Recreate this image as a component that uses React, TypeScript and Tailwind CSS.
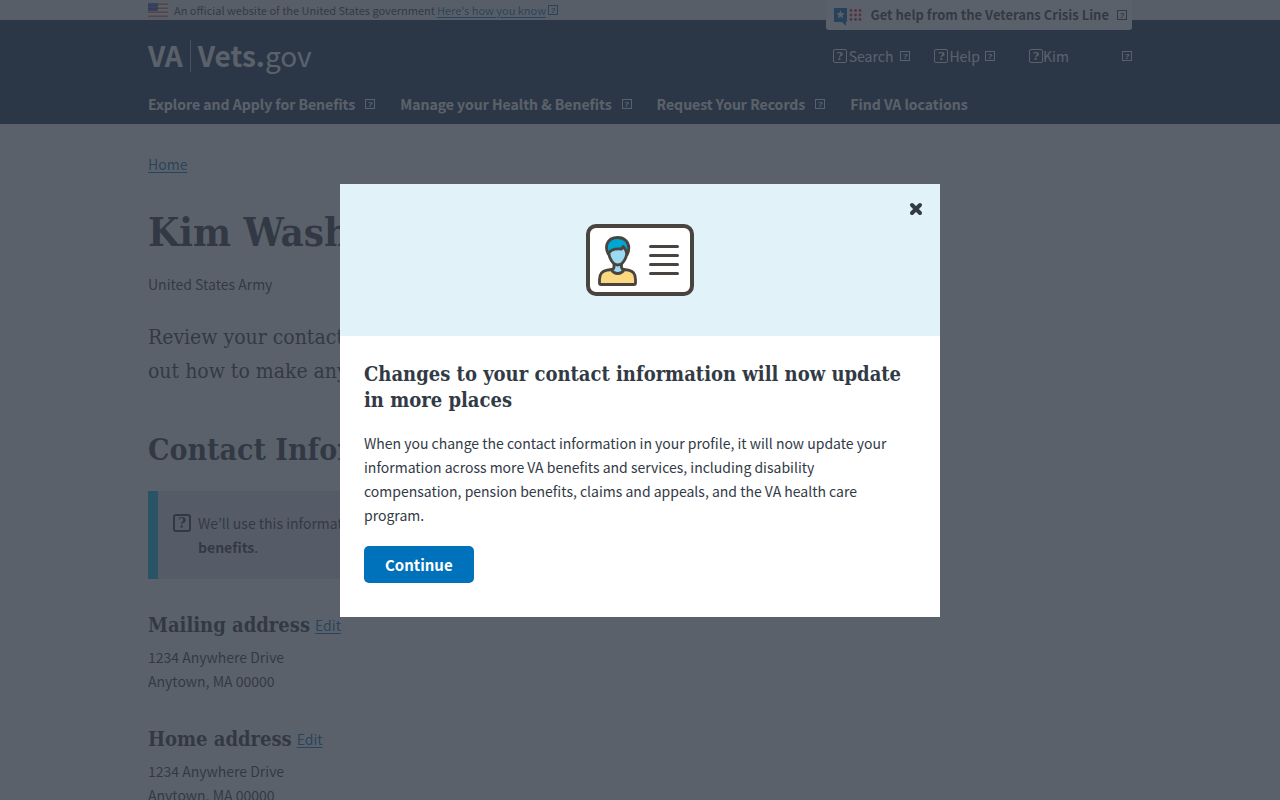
import React from "react";

const sans = "font-['Noto_Sans_CJK_KR','Noto_Sans_CJK_SC',sans-serif]";
const slab = "font-['DejaVu_Serif_Condensed','DejaVu_Serif',serif]";

function Mark({ size = "sm" }: { size?: "sm" | "md" | "lg" }) {
  const sizes = {
    sm: "size-[10px] border text-[8px]",
    md: "size-[14px] border text-[11px] rounded-[2px]",
    lg: "size-[18px] border-2 text-[14px] rounded-[3px]",
  };
  return (
    <span
      aria-hidden="true"
      className={`inline-flex shrink-0 items-center justify-center border-current font-['DejaVu_Serif',serif] leading-none font-bold ${sizes[size]}`}
    >
      ?
    </span>
  );
}

function Flag() {
  const rows = [0, 4, 8, 12];
  return (
    <svg viewBox="0 0 20 14" className="h-[14px] w-5 shrink-0" role="img" aria-label="U.S. flag">
      <rect width="20" height="14" fill="#fff" />
      {rows.map((y) => (
        <rect key={y} y={y + 0.5} width="20" height="1.4" fill="#e4543f" />
      ))}
      <rect width="10" height="8" fill="#3543b5" />
      {[1, 4, 7].map((y) =>
        [1, 3, 5, 7, 9].map((x) => (
          <rect key={`${x}-${y}`} x={x - 0.5} y={y - 0.5} width="1" height="1" fill="#fff" opacity=".75" />
        )),
      )}
    </svg>
  );
}

function CrisisIcon() {
  return (
    <svg viewBox="0 0 29 20" className="h-5 w-[29px] shrink-0" aria-hidden="true">
      <path d="M1 1h13v14h-1v4l-4-4H1z" fill="#046aa9" />
      <path d="M7.5 3.200l1.200 3h3.100l-2.500 2 1 3.200-2.800-1.900-2.800 1.900 1-3.200-2.500-2h3.100z" fill="#fff" />
      {[3.5, 8, 12.5].map((y) =>
        [18, 22.5, 27].map((x) => <circle key={`${x}-${y}`} cx={x} cy={y} r="1.4" fill="#d8202c" />),
      )}
    </svg>
  );
}

function IdCard() {
  return (
    <svg viewBox="0 0 108 72" className="h-[72px] w-[108px]" aria-hidden="true">
      <rect x="2" y="2" width="104" height="68" rx="8" fill="#fff" stroke="#494440" strokeWidth="4" />
      <g stroke="#494440" strokeWidth="2.8" strokeLinejoin="round" strokeLinecap="round">
        <path d="M13.500 59V55.500C13.500 50 16.500 47 21 46.200C23 45.800 24.500 45.500 26 45.500H37C39 45.500 40.500 45.800 42.500 46.200C47 47 49.500 50 49.500 55.500V59Q49.500 60.500 48 60.500H15Q13.500 60.500 13.500 59Z" fill="#fad980" />
        <path d="M28 39V43.500Q27.500 45.200 25.500 45.800C27 48.500 29 49.500 31.800 49.500S36.500 48.500 38 45.800Q36 45.200 35.500 43.500V39Z" fill="#9bdaf1" />
        <path d="M22.500 26C22.500 34 27 41 31.800 41S41.200 34 41.200 26L38 18H26Z" fill="#9bdaf1" />
        <path d="M22.300 30C20.500 27 20.200 23 21 20C22.500 16 26.500 13.500 31.800 13.500C38.500 13.500 42.800 18 42.800 24C42.800 27 42.200 29 41.200 30.500C40.500 27.500 39.500 25 37.200 22.500L35.500 25C30 24.500 24.500 25 22.300 30Z" fill="#00a6d2" />
      </g>
      <path d="M64.500 22.500h27M64.500 31.500h27M64.500 40.500h27M64.500 49.500h27" stroke="#494440" strokeWidth="3" strokeLinecap="round" />
    </svg>
  );
}

function Address({ title, className }: { title: string; className: string }) {
  return (
    <section className={className}>
      <div className="flex items-center gap-[5px]">
        <h3 className={`${slab} text-[20px] leading-6 font-bold`}>{title}</h3>
        <a href="#edit" className="text-[#0071bb] underline underline-offset-2">
          Edit
        </a>
      </div>
      <p className="mt-2">
        1234 Anywhere Drive
        <br />
        Anytown, MA 00000
      </p>
    </section>
  );
}

export default function App() {
  return (
    <div className={`${sans} h-screen overflow-hidden bg-white text-[14px] leading-6 text-[#323a45]`}>
      <div className="h-5 bg-[#f1f1f1] px-4">
        <div className="mx-auto flex max-w-[984px] items-start justify-between">
          <div className="flex h-5 items-center text-[11px] leading-5">
            <Flag />
            <span className="ml-[6px]">An official website of the United States government</span>
            <a href="#how" className="ml-[2px] flex items-center gap-[2px] text-[#0071bb]">
              <span className="underline underline-offset-2">Here's how you know</span>
              <Mark />
            </a>
          </div>
          <button
            type="button"
            className="relative flex h-[30px] items-center gap-2 rounded-b-[3px] bg-white pr-[5px] pl-[7px] text-[13px] font-bold"
          >
            <span className="pt-1">
              <CrisisIcon />
            </span>
            Get help from the Veterans Crisis Line
            <Mark />
          </button>
        </div>
      </div>

      <header className="bg-[#112e51] px-4 pb-2 text-white">
        <div className="mx-auto max-w-[984px]">
          <div className="flex h-[72px] items-center justify-between">
            <a href="#home" aria-label="VA Vets.gov" className="flex items-center text-[28px]">
              <span className="pb-[3px] leading-8 font-bold">VA</span>
              <span className="mx-[7px] h-8 w-px bg-white/60" />
              <span className="pb-[3px] leading-8 font-bold">Vets.</span>
              <span className="pb-[3px] leading-8 font-normal">gov</span>
            </a>
            <div className="flex items-center">
              <button type="button" className="flex items-center gap-[2px]">
                <Mark size="md" />
                Search
                <span className="ml-[5px] flex">
                  <Mark />
                </span>
              </button>
              <button type="button" className="ml-6 flex items-center gap-px">
                <Mark size="md" />
                Help
                <span className="ml-1 flex">
                  <Mark />
                </span>
              </button>
              <button type="button" className="ml-[34px] flex w-[103px] items-center">
                <Mark size="md" />
                Kim
                <span className="ml-auto flex">
                  <Mark />
                </span>
              </button>
            </div>
          </div>
          <nav className="flex h-6 items-center gap-[25px] font-bold">
            <button type="button" className="flex items-center gap-[10px]">
              Explore and Apply for Benefits
              <Mark />
            </button>
            <button type="button" className="flex items-center gap-[10px]">
              Manage your Health &amp; Benefits
              <Mark />
            </button>
            <button type="button" className="flex items-center gap-[10px]">
              Request Your Records
              <Mark />
            </button>
            <a href="#locations">Find VA locations</a>
          </nav>
        </div>
      </header>

      <main className="px-4 pt-7">
        <div className="mx-auto max-w-[984px]">
          <a href="#home" className="block w-fit text-[#0071bb] underline underline-offset-2">
            Home
          </a>
          <h1 className={`${slab} mt-8 text-[40px] leading-[48px] font-bold`}>Kim Washington</h1>
          <p className="mt-4">United States Army</p>
          <p className={`${slab} mt-6 text-[21px] leading-[34px]`}>
            Review your contact information and find
            <br />
            out how to make any changes.
          </p>
          <h2 className={`${slab} mt-[42px] text-[30px] leading-10 font-bold`}>Contact Information</h2>
          <div className="mt-[21px] flex max-w-[640px] gap-[7px] border-l-[10px] border-[#02bfe7] bg-[#e6e4ee] px-[15px] py-5">
            <span className="flex h-6 items-center">
              <Mark size="lg" />
            </span>
            <p>
              We’ll use this information to communicate with you about your VA
              <br />
              <b>benefits</b>.
            </p>
          </div>
          <Address title="Mailing address" className="mt-[34px]" />
          <Address title="Home address" className="mt-[34px]" />
        </div>
      </main>

      <div className="fixed inset-0 flex items-center justify-center bg-[#323a45]/80 p-4">
        <div role="dialog" aria-modal="true" aria-labelledby="modal-title" className="relative w-full max-w-[600px] bg-white">
          <div className="flex h-[152px] items-center justify-center bg-[#e1f3f8]">
            <IdCard />
          </div>
          <button type="button" aria-label="Close" className="absolute top-[18px] right-[17px] flex size-[14px]">
            <svg viewBox="0 0 14 14" className="size-[14px]" aria-hidden="true">
              <path d="M3 3l8 8M11 3l-8 8" stroke="#323a45" strokeWidth="4" strokeLinecap="round" />
            </svg>
          </button>
          <div className="px-6 pt-[25px] pb-[34px]">
            <h2 id="modal-title" className={`${slab} text-[20px] leading-[26px] font-bold`}>
              Changes to your contact information will now update
              <br />
              in more places
            </h2>
            <p className="mt-[18px]">
              When you change the contact information in your profile, it will now update your
              <br />
              information across more VA benefits and services, including disability
              <br />
              compensation, pension benefits, claims and appeals, and the VA health care
              <br />
              program.
            </p>
            <button type="button" className="mt-[19px] block h-[37px] rounded-[5px] bg-[#0071bb] px-[21px] pt-px text-[15px] font-bold text-white">
              Continue
            </button>
          </div>
        </div>
      </div>
    </div>
  );
}
